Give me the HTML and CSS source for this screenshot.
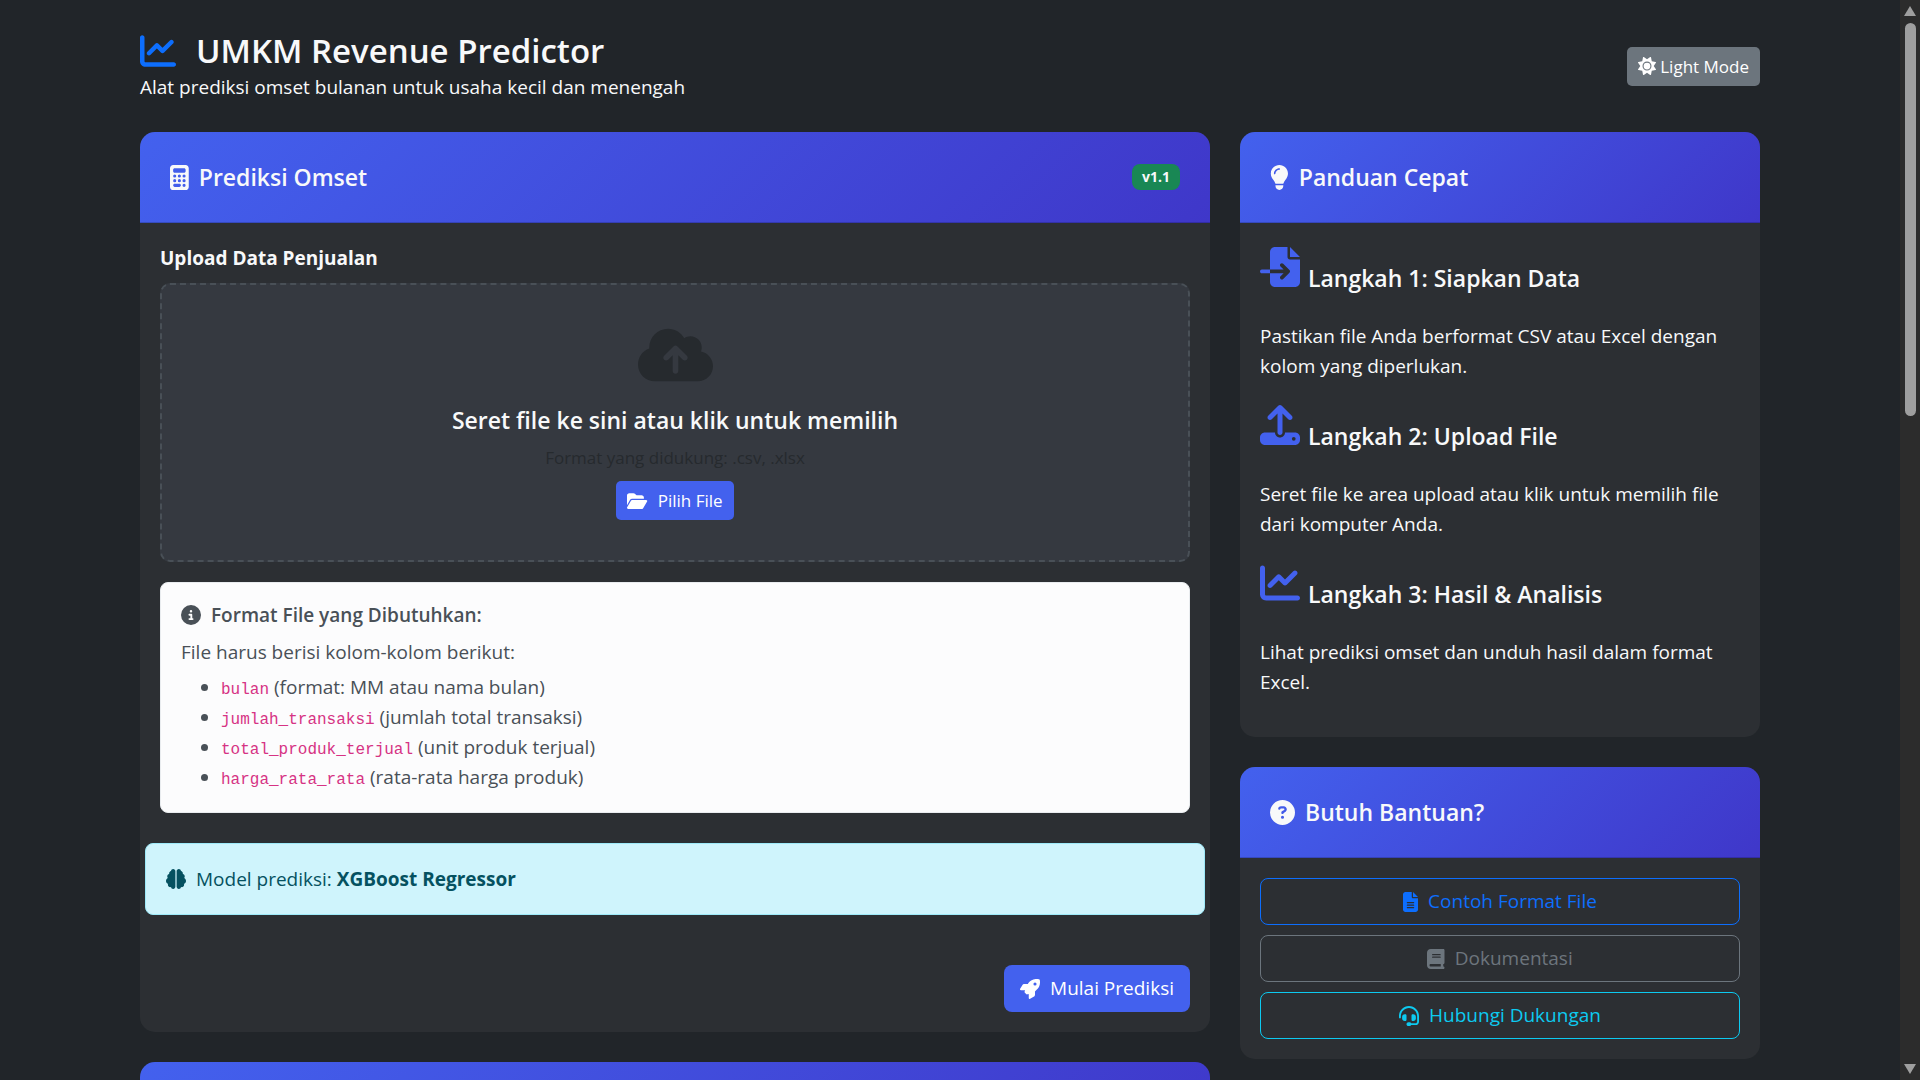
FILE: index.html
```html
<!DOCTYPE html>
<html lang="id">
<head>
<meta charset="utf-8">
<meta name="viewport" content="width=device-width, initial-scale=1">
<title>UMKM Revenue Predictor</title>
<link rel="stylesheet" href="styles.css">
</head>
<body>
<div class="page">
  <div class="container">
    <header class="site-header">
      <div>
        <h1 class="site-title">
          <svg class="icon icon-title" viewBox="0 0 512 512" aria-hidden="true"><path d="M64 64c0-17.7-14.3-32-32-32S0 46.3 0 64V400c0 44.2 35.800 80 80 80H480c17.700 0 32-14.300 32-32s-14.300-32-32-32H80c-8.800 0-16-7.200-16-16V64zm406.600 86.600c12.500-12.500 12.500-32.800 0-45.300s-32.800-12.500-45.300 0L320 210.700l-57.400-57.400c-12.500-12.500-32.800-12.500-45.300 0l-112 112c-12.500 12.500-12.500 32.800 0 45.300s32.800 12.500 45.300 0L240 221.300l57.400 57.400c12.500 12.500 32.800 12.500 45.300 0l128-128z"/></svg>
          UMKM Revenue Predictor
        </h1>
        <p class="site-subtitle">Alat prediksi omset bulanan untuk usaha kecil dan menengah</p>
      </div>
      <button class="btn btn-small btn-secondary" type="button">
        <svg class="icon icon-small" viewBox="0 0 512 512" aria-hidden="true"><path d="M361.5 1.2c5 2.1 8.6 6.6 9.6 11.9L391 121l107.900 19.800c5.300 1 9.800 4.600 11.900 9.600s1.500 10.700-1.600 15.200L446.900 256l62.300 90.300c3.100 4.500 3.700 10.200 1.600 15.200s-6.600 8.600-11.900 9.600L391 391 371.100 498.900c-1 5.300-4.600 9.800-9.600 11.900s-10.700 1.500-15.200-1.600L256 446.900l-90.300 62.300c-4.500 3.100-10.200 3.700-15.200 1.600s-8.600-6.600-9.600-11.900L121 391 13.100 371.100c-5.300-1-9.800-4.600-11.900-9.600s-1.500-10.700 1.600-15.200L65.100 256 2.800 165.700c-3.100-4.500-3.700-10.200-1.600-15.200s6.600-8.600 11.900-9.600L121 121 140.900 13.100c1-5.300 4.600-9.800 9.600-11.900s10.700-1.500 15.200 1.600L256 65.100 346.300 2.800c4.500-3.100 10.200-3.700 15.200-1.600zM160 256a96 96 0 1 1 192 0 96 96 0 1 1 -192 0zm224 0a128 128 0 1 0 -256 0 128 128 0 1 0 256 0z"/></svg>
        Light Mode
      </button>
    </header>

    <div class="columns">
      <main class="column">
        <section class="card">
          <div class="card-header">
            <h2 class="card-title">
              <svg class="icon icon-heading" viewBox="0 0 384 512" aria-hidden="true"><path d="M64 0C28.700 0 0 28.700 0 64V448c0 35.300 28.700 64 64 64H320c35.300 0 64-28.700 64-64V64c0-35.300-28.700-64-64-64H64zM96 64H288c17.700 0 32 14.300 32 32v32c0 17.700-14.300 32-32 32H96c-17.700 0-32-14.300-32-32V96c0-17.700 14.300-32 32-32zm32 160a32 32 0 1 1 -64 0 32 32 0 1 1 64 0zM96 352a32 32 0 1 1 0-64 32 32 0 1 1 0 64zM64 416c0-17.700 14.300-32 32-32h96c17.700 0 32 14.300 32 32s-14.300 32-32 32H96c-17.700 0-32-14.300-32-32zM192 256a32 32 0 1 1 0-64 32 32 0 1 1 0 64zm32 64a32 32 0 1 1 -64 0 32 32 0 1 1 64 0zm64-64a32 32 0 1 1 0-64 32 32 0 1 1 0 64zm32 64a32 32 0 1 1 -64 0 32 32 0 1 1 64 0zM288 448a32 32 0 1 1 0-64 32 32 0 1 1 0 64z"/></svg>
              Prediksi Omset
            </h2>
            <span class="badge">v1.1</span>
          </div>
          <div class="card-body">
            <h3 class="field-label">Upload Data Penjualan</h3>
            <div class="dropzone">
              <svg class="icon icon-cloud" viewBox="0 0 640 512" aria-hidden="true"><path d="M144 480C64.500 480 0 415.500 0 336c0-62.800 40.200-116.200 96.200-135.900c-.1-2.700-.2-5.400-.2-8.100c0-88.400 71.600-160 160-160c59.300 0 111 32.200 138.700 80.200C409.900 102 428.300 96 448 96c53 0 96 43 96 96c0 12.200-2.300 23.800-6.400 34.600C596 238.400 640 290.100 640 352c0 70.700-57.300 128-128 128H144zm79-217c-9.400 9.400-9.400 24.600 0 33.900s24.600 9.400 33.900 0l39-39V392c0 13.300 10.700 24 24 24s24-10.700 24-24V257.900l39 39c9.400 9.400 24.600 9.400 33.900 0s9.400-24.600 0-33.900l-80-80c-9.400-9.400-24.600-9.400-33.900 0l-80 80z"/></svg>
              <p class="dropzone-title">Seret file ke sini atau klik untuk memilih</p>
              <p class="dropzone-hint">Format yang didukung: .csv, .xlsx</p>
              <button class="btn btn-small btn-primary btn-spaced" type="button">
                <svg class="icon icon-small" viewBox="0 0 576 512" aria-hidden="true"><path d="M88.700 223.800L0 375.800V96C0 60.700 28.700 32 64 32H181.500c17 0 33.300 6.700 45.300 18.700l26.500 26.500c12 12 28.300 18.700 45.300 18.700H416c35.300 0 64 28.700 64 64v32H144c-22.800 0-43.800 12.100-55.300 31.800zm27.600 16.100C122.100 230 132.600 224 144 224H544c11.500 0 22 6.100 27.700 16.100s5.700 22.200-.1 32.100l-112 192C453.900 474 443.400 480 432 480H32c-11.500 0-22-6.100-27.700-16.100s-5.700-22.200 .1-32.100l112-192z"/></svg>
                Pilih File
              </button>
            </div>

            <div class="alert alert-light">
              <h4 class="alert-title">
                <svg class="icon" viewBox="0 0 512 512" aria-hidden="true"><path d="M256 512A256 256 0 1 0 256 0a256 256 0 1 0 0 512zM216 336h24V272H216c-13.300 0-24-10.700-24-24s10.700-24 24-24h48c13.300 0 24 10.700 24 24v88h8c13.300 0 24 10.700 24 24s-10.700 24-24 24H216c-13.300 0-24-10.700-24-24s10.700-24 24-24zm40-208a32 32 0 1 1 0 64 32 32 0 1 1 0-64z"/></svg>
                Format File yang Dibutuhkan:
              </h4>
              <p class="alert-text">File harus berisi kolom-kolom berikut:</p>
              <ul class="format-list">
                <li><code>bulan</code> (format: MM atau nama bulan)</li>
                <li><code>jumlah_transaksi</code> (jumlah total transaksi)</li>
                <li><code>total_produk_terjual</code> (unit produk terjual)</li>
                <li><code>harga_rata_rata</code> (rata-rata harga produk)</li>
              </ul>
            </div>

            <div class="alert alert-info">
              <svg class="icon" viewBox="0 0 512 512" aria-hidden="true"><path d="M184 0c30.900 0 56 25.100 56 56V456c0 30.900-25.100 56-56 56c-28.900 0-52.700-21.900-55.700-50.100c-5.200 1.400-10.700 2.100-16.300 2.100c-35.300 0-64-28.700-64-64c0-7.400 1.300-14.600 3.600-21.200C21.400 367.400 0 338.200 0 304c0-31.900 18.700-59.500 45.800-72.300C37.100 220.800 32 207 32 192c0-30.700 21.600-56.300 50.400-62.600C80.800 123.900 80 118 80 112c0-29.900 20.600-55.100 48.300-62.100C131.300 21.900 155.100 0 184 0zM328 0c28.900 0 52.600 21.900 55.700 49.900c27.800 7 48.300 32.100 48.300 62.100c0 6-.8 11.900-2.400 17.400c28.800 6.200 50.400 31.900 50.400 62.600c0 15-5.100 28.800-13.800 39.700C493.300 244.500 512 272.100 512 304c0 34.200-21.400 63.400-51.600 74.800c2.300 6.600 3.600 13.800 3.600 21.200c0 35.300-28.700 64-64 64c-5.600 0-11.100-.7-16.300-2.100c-3 28.200-26.800 50.100-55.700 50.100c-30.900 0-56-25.100-56-56V56c0-30.900 25.100-56 56-56z"/></svg>
              <span>Model prediksi: <strong>XGBoost Regressor</strong></span>
            </div>

            <div class="actions">
              <button class="btn btn-primary btn-spaced" type="button">
                <svg class="icon" viewBox="0 0 512 512" aria-hidden="true"><path d="M156.600 384.900L125.700 354c-8.500-8.500-11.500-20.800-7.700-32.200c3-8.900 7-20.500 11.800-33.800L24 288c-8.600 0-16.600-4.600-20.900-12.100s-4.200-16.700 .2-24.100l52.500-88.500c13-21.900 36.500-35.300 61.900-35.300l82.300 0c2.400-4 4.800-7.700 7.200-11.300C289.100-4.100 411.100-8.100 483.900 5.300c11.600 2.100 20.600 11.200 22.800 22.800c13.400 72.900 9.300 194.800-111.400 276.700c-3.500 2.400-7.300 4.800-11.300 7.200v82.300c0 25.400-13.400 49-35.300 61.900l-88.500 52.500c-7.400 4.400-16.600 4.500-24.100 .2s-12.100-12.200-12.100-20.900V380.800c-14.100 4.900-26.400 8.900-35.700 11.900c-11.200 3.600-23.400 .5-31.800-7.800zM384 168a40 40 0 1 0 0-80 40 40 0 1 0 0 80z"/></svg>
                Mulai Prediksi
              </button>
            </div>
          </div>
        </section>

        <section class="card">
          <div class="card-header"></div>
        </section>
      </main>

      <aside class="column">
        <section class="card">
          <div class="card-header">
            <h2 class="card-title">
              <svg class="icon icon-heading" viewBox="0 0 384 512" aria-hidden="true"><path d="M272 384c9.600-31.900 29.500-59.100 49.200-86.200l0 0c5.200-7.100 10.400-14.200 15.400-21.400c19.800-28.500 31.400-63 31.400-100.300C368 78.800 289.200 0 192 0S16 78.800 16 176c0 37.300 11.600 71.900 31.400 100.300c5 7.200 10.200 14.300 15.400 21.400l0 0c19.800 27.100 39.700 54.400 49.200 86.200H272zM192 512c44.200 0 80-35.800 80-80V416H112v16c0 44.200 35.800 80 80 80zM112 176c0 8.800-7.200 16-16 16s-16-7.200-16-16c0-61.900 50.100-112 112-112c8.800 0 16 7.200 16 16s-7.200 16-16 16c-44.200 0-80 35.800-80 80z"/></svg>
              Panduan Cepat
            </h2>
          </div>
          <div class="card-body">
            <div class="step">
              <h3 class="step-title">
                <svg class="icon icon-step" viewBox="0 0 512 512" aria-hidden="true"><path d="M128 64c0-35.300 28.700-64 64-64H352V128c0 17.700 14.300 32 32 32H512V448c0 35.300-28.700 64-64 64H192c-35.300 0-64-28.700-64-64V336H302.100l-39 39c-9.400 9.400-9.400 24.600 0 33.900s24.600 9.400 33.900 0l80-80c9.400-9.400 9.400-24.600 0-33.900l-80-80c-9.400-9.400-24.600-9.400-33.900 0s-9.400 24.600 0 33.900l39 39H128V64zm0 224v48H24c-13.300 0-24-10.700-24-24s10.700-24 24-24H128zM512 128H384V0L512 128z"/></svg>
                Langkah 1: Siapkan Data
              </h3>
              <p class="step-text">Pastikan file Anda berformat CSV atau Excel dengan kolom yang diperlukan.</p>
            </div>
            <div class="step">
              <h3 class="step-title">
                <svg class="icon icon-step" viewBox="0 0 512 512" aria-hidden="true"><path d="M288 109.300V352c0 17.700-14.300 32-32 32s-32-14.300-32-32V109.300l-73.400 73.400c-12.500 12.500-32.800 12.500-45.300 0s-12.500-32.800 0-45.300l128-128c12.500-12.500 32.800-12.500 45.300 0l128 128c12.500 12.500 12.500 32.800 0 45.300s-32.800 12.500-45.300 0L288 109.300zM64 352H192c0 35.300 28.700 64 64 64s64-28.700 64-64H448c35.300 0 64 28.700 64 64v32c0 35.300-28.700 64-64 64H64c-35.300 0-64-28.700-64-64V416c0-35.300 28.700-64 64-64zM432 456a24 24 0 1 0 0-48 24 24 0 1 0 0 48z"/></svg>
                Langkah 2: Upload File
              </h3>
              <p class="step-text">Seret file ke area upload atau klik untuk memilih file dari komputer Anda.</p>
            </div>
            <div class="step">
              <h3 class="step-title">
                <svg class="icon icon-step" viewBox="0 0 512 512" aria-hidden="true"><path d="M64 64c0-17.700-14.300-32-32-32S0 46.300 0 64V400c0 44.200 35.800 80 80 80H480c17.700 0 32-14.300 32-32s-14.300-32-32-32H80c-8.800 0-16-7.200-16-16V64zm406.600 86.600c12.500-12.500 12.500-32.800 0-45.300s-32.800-12.500-45.300 0L320 210.700l-57.400-57.400c-12.500-12.500-32.800-12.500-45.300 0l-112 112c-12.500 12.500-12.500 32.800 0 45.300s32.800 12.500 45.300 0L240 221.300l57.400 57.400c12.500 12.500 32.800 12.500 45.300 0l128-128z"/></svg>
                Langkah 3: Hasil &amp; Analisis
              </h3>
              <p class="step-text">Lihat prediksi omset dan unduh hasil dalam format Excel.</p>
            </div>
          </div>
        </section>

        <section class="card">
          <div class="card-header">
            <h2 class="card-title">
              <svg class="icon icon-heading" viewBox="0 0 512 512" aria-hidden="true"><path d="M256 512A256 256 0 1 0 256 0a256 256 0 1 0 0 512zM169.800 165.300c7.900-22.300 29.100-37.300 52.800-37.300h58.300c34.900 0 63.100 28.300 63.100 63.100c0 22.600-12.100 43.500-31.700 54.800L280 264.400c-.2 13-10.900 23.600-24 23.600c-13.300 0-24-10.700-24-24V250.500c0-8.600 4.600-16.500 12.100-20.800l44.300-25.400c4.700-2.700 7.600-7.700 7.600-13.100c0-8.400-6.800-15.100-15.100-15.100H222.600c-3.400 0-6.400 2.100-7.500 5.300l-.4 1.200c-4.400 12.500-18.200 19-30.600 14.600s-19-18.200-14.600-30.600l.4-1.200zM224 352a32 32 0 1 1 64 0 32 32 0 1 1 -64 0z"/></svg>
              Butuh Bantuan?
            </h2>
          </div>
          <div class="card-body help-links">
            <a class="btn btn-outline btn-spaced outline-primary" href="#format">
              <svg class="icon" viewBox="0 0 384 512" aria-hidden="true"><path d="M64 0C28.700 0 0 28.700 0 64V448c0 35.300 28.700 64 64 64H320c35.300 0 64-28.700 64-64V160H256c-17.700 0-32-14.300-32-32V0H64zM256 0V128H384L256 0zM112 256H272c8.800 0 16 7.200 16 16s-7.200 16-16 16H112c-8.800 0-16-7.200-16-16s7.200-16 16-16zm0 64H272c8.800 0 16 7.200 16 16s-7.200 16-16 16H112c-8.800 0-16-7.200-16-16s7.200-16 16-16zm0 64H272c8.800 0 16 7.200 16 16s-7.200 16-16 16H112c-8.800 0-16-7.200-16-16s7.200-16 16-16z"/></svg>
              Contoh Format File
            </a>
            <a class="btn btn-outline btn-spaced outline-secondary" href="#dokumentasi">
              <svg class="icon" viewBox="0 0 448 512" aria-hidden="true"><path d="M96 0C43 0 0 43 0 96V416c0 53 43 96 96 96H384h32c17.700 0 32-14.300 32-32s-14.300-32-32-32V384c17.700 0 32-14.300 32-32V32c0-17.700-14.300-32-32-32H384 96zm0 384H352v64H96c-17.700 0-32-14.300-32-32s14.300-32 32-32zm32-240c0-8.800 7.200-16 16-16H336c8.800 0 16 7.200 16 16s-7.200 16-16 16H144c-8.800 0-16-7.200-16-16zm16 48H336c8.800 0 16 7.200 16 16s-7.200 16-16 16H144c-8.800 0-16-7.200-16-16s7.200-16 16-16z"/></svg>
              Dokumentasi
            </a>
            <a class="btn btn-outline btn-spaced outline-info" href="#dukungan">
              <svg class="icon" viewBox="0 0 512 512" aria-hidden="true"><path d="M256 48C141.100 48 48 141.100 48 256v40c0 13.300-10.700 24-24 24s-24-10.700-24-24V256C0 114.600 114.600 0 256 0S512 114.600 512 256V400.100c0 48.600-39.400 88-88.100 88L313.600 488c-8.300 14.300-23.800 24-41.600 24H240c-26.500 0-48-21.500-48-48s21.500-48 48-48h32c17.800 0 33.300 9.700 41.600 24l110.400 .1c22.100 0 40-17.900 40-40V256c0-114.900-93.100-208-208-208zM144 208h16c17.700 0 32 14.300 32 32V352c0 17.700-14.300 32-32 32H144c-35.300 0-64-28.700-64-64V272c0-35.300 28.700-64 64-64zm224 0c35.300 0 64 28.700 64 64v48c0 35.300-28.700 64-64 64H352c-17.700 0-32-14.300-32-32V240c0-17.700 14.300-32 32-32h16z"/></svg>
              Hubungi Dukungan
            </a>
          </div>
        </section>
      </aside>
    </div>
  </div>
</div>
<div class="scrollbar" aria-hidden="true">
  <span class="scroll-arrow scroll-up"></span>
  <span class="scroll-track"><span class="scroll-thumb"></span></span>
  <span class="scroll-arrow scroll-down"></span>
</div>
</body>
</html>
```

FILE: styles.css
```css
:root {
  --bg: #212529;
  --card: #2c2f33;
  --text: #f8f9fa;
  --primary: #4361ee;
  --primary-deep: #3f37c9;
}

* { box-sizing: border-box; }

body {
  margin: 0;
  display: flex;
  height: 100vh;
  overflow: hidden;
  background: var(--bg);
  color: var(--text);
  font-family: "Open Sans", "Noto Sans", sans-serif;
  font-size: 19px;
  line-height: 30px;
}

h1, h2, h3, h4, p, ul { margin: 0; }

.page {
  flex: 1;
  min-width: 0;
  overflow: hidden;
}

.container {
  max-width: 1650px;
  margin: 0 auto;
  padding: 30px 15px;
}

.icon {
  flex: none;
  height: 20px;
  fill: currentColor;
}

.icon-small { height: 18px; }
.icon-heading { height: 25px; }
.icon-title { height: 36px; color: #0d6efd; }
.icon-step { height: 40px; color: var(--primary); }
.icon-cloud { height: 60px; margin-bottom: 20px; }

.site-header {
  display: flex;
  justify-content: space-between;
  align-items: center;
  margin-bottom: 30px;
}

.site-title {
  display: flex;
  align-items: center;
  gap: 20px;
  font-size: 33px;
  font-weight: 600;
  line-height: 42px;
}

.columns {
  display: grid;
  grid-template-columns: minmax(0, 1070fr) minmax(0, 520fr);
  gap: 30px;
  align-items: start;
}

.column {
  display: grid;
  gap: 30px;
}

.card {
  overflow: hidden;
  border-radius: 15px;
  background: var(--card);
}

.card-header {
  display: flex;
  justify-content: space-between;
  align-items: center;
  min-height: 91px;
  padding: 30px;
  border-bottom: 1px solid rgba(0, 0, 0, 0.18);
  background: linear-gradient(135deg, var(--primary), var(--primary-deep)) border-box;
}

.card-title {
  display: flex;
  align-items: center;
  gap: 10px;
  font-size: 23px;
  font-weight: 600;
  line-height: 30px;
}

.badge {
  padding: 3px 10px;
  border-radius: 8px;
  background: #198754;
  font-size: 14px;
  font-weight: 700;
  line-height: 20px;
}

.card-body { padding: 20px; }

.field-label {
  margin-bottom: 10px;
  font-size: 19px;
  font-weight: 700;
}

.dropzone {
  display: flex;
  flex-direction: column;
  align-items: center;
  padding: 40px;
  border: 2px dashed #495057;
  border-radius: 10px;
  background: #353940;
  text-align: center;
}

.dropzone .icon-cloud,
.dropzone-hint { color: #262a2e; }

.dropzone-title {
  margin-bottom: 10px;
  font-size: 23px;
  font-weight: 600;
}

.dropzone-hint {
  margin-bottom: 10px;
  font-size: 17px;
  line-height: 26px;
}

.btn {
  display: inline-flex;
  justify-content: center;
  align-items: center;
  padding: 8px 15px;
  border: 1px solid transparent;
  border-radius: 8px;
  color: #fff;
  font: inherit;
  line-height: 29px;
  text-decoration: none;
  cursor: pointer;
}

.btn-small {
  gap: 4px;
  padding: 5px 10px;
  border-radius: 5px;
  font-size: 17px;
  line-height: 27px;
}

.btn-spaced { gap: 10px; }
.btn-primary { background: var(--primary); }
.btn-secondary { background: #6c757d; }
.btn-outline { border-color: currentColor; }
.outline-primary { color: #0d6efd; }
.outline-secondary { color: #6c757d; }
.outline-info { color: #0dcaf0; }

.alert {
  padding: 20px;
  border: 1px solid;
  border-radius: 8px;
}

.alert-light {
  margin: 20px 0 30px;
  border-color: #e9ecef;
  background: #fcfcfd;
  color: #495057;
}

.alert-title {
  display: flex;
  align-items: center;
  gap: 10px;
  margin-bottom: 10px;
  font-size: 19px;
  font-weight: 600;
  line-height: 24px;
}

.alert-text { margin-bottom: 5px; }
.format-list { padding-left: 40px; }

code {
  color: #d63384;
  font-family: "Liberation Mono", monospace;
  font-size: 16px;
  line-height: 16px;
}

.alert-info {
  display: flex;
  align-items: center;
  gap: 10px;
  margin: 0 -15px;
  border-color: #9eeaf9;
  background: #cff4fc;
  color: #055160;
}

.actions {
  display: flex;
  justify-content: flex-end;
  margin-top: 50px;
}

.step { margin-bottom: 20px; }

.step-title {
  display: flex;
  align-items: baseline;
  gap: 8px;
  height: 58px;
  margin-bottom: 20px;
  padding-top: 4px;
  font-size: 23px;
  font-weight: 600;
}

.help-links {
  display: grid;
  gap: 10px;
}

.scrollbar {
  display: flex;
  flex: none;
  flex-direction: column;
  align-items: center;
  gap: 7px;
  width: 20px;
  padding: 6px 0;
  background: #2c2c2c;
}

.scroll-arrow {
  border: 6px solid transparent;
  border-top-width: 0;
  border-bottom: 10px solid #9f9f9f;
}

.scroll-down { transform: rotate(180deg); }

.scroll-track { flex: 1; }

.scroll-thumb {
  display: block;
  width: 11px;
  height: 38%;
  border-radius: 6px;
  background: #9f9f9f;
}
```
